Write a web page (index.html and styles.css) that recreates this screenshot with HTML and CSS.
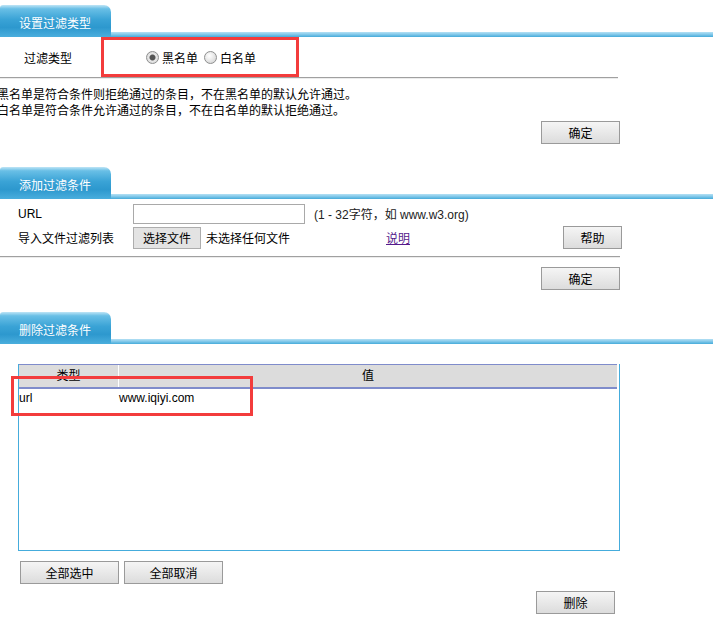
FILE: index.html
```html
<!DOCTYPE html>
<html lang="zh-CN">
<head>
    <meta charset="UTF-8">
    <title>过滤设置</title>
    <link rel="stylesheet" href="styles.css">
</head>
<body>
    <!-- 设置过滤类型 -->
    <section class="panel panel-type">
        <div class="tab-head"><span class="tab">设置过滤类型</span></div>
        <div class="type-row">
            <span class="type-label">过滤类型</span>
            <div class="mark-box">
                <label class="radio"><input type="radio" name="mode" checked>黑名单</label>
                <label class="radio"><input type="radio" name="mode">白名单</label>
            </div>
        </div>
        <hr class="sep sep-short">
        <p class="note">黑名单是符合条件则拒绝通过的条目，不在黑名单的默认允许通过。<br>白名单是符合条件允许通过的条目，不在白名单的默认拒绝通过。</p>
        <div class="actions actions-type"><button class="btn btn-ok">确定</button></div>
    </section>

    <!-- 添加过滤条件 -->
    <section class="panel panel-add">
        <div class="tab-head"><span class="tab">添加过滤条件</span></div>
        <div class="form-row">
            <span class="form-label">URL</span>
            <input class="url-input" type="text">
            <span class="hint">(1 - 32字符，如 www.w3.org)</span>
        </div>
        <div class="form-row">
            <span class="form-label">导入文件过滤列表</span>
            <span class="file-btn">选择文件</span>
            <span class="file-name">未选择任何文件</span>
            <a class="help-link" href="#">说明</a>
            <button class="btn btn-help">帮助</button>
        </div>
        <hr class="sep">
        <div class="actions actions-add"><button class="btn btn-ok">确定</button></div>
    </section>

    <!-- 删除过滤条件 -->
    <section class="panel panel-del">
        <div class="tab-head"><span class="tab">删除过滤条件</span></div>
        <div class="list-box">
            <div class="list-head">
                <span class="col-type">类型</span>
                <span class="col-value">值</span>
            </div>
            <div class="list-row">
                <span class="col-type">url</span>
                <span class="col-value">www.iqiyi.com</span>
            </div>
            <div class="mark-row"></div>
        </div>
        <div class="list-actions">
            <button class="btn btn-wide">全部选中</button>
            <button class="btn btn-wide">全部取消</button>
        </div>
        <div class="actions actions-del"><button class="btn btn-ok">删除</button></div>
    </section>
</body>
</html>
```

FILE: styles.css
```css
* {
    margin: 0;
    padding: 0;
    box-sizing: border-box;
}

body {
    font-family: "Liberation Sans", "Noto Sans CJK SC", sans-serif;
    font-size: 12px;
    color: #000;
    background: #fff;
    width: 713px;
}

/* cabecera con pestaña */
.tab-head {
    height: 37px;
    padding-top: 5px;
    background: linear-gradient(#b4e0f4, #8ccdec 40%, #45abda) no-repeat left bottom / 100% 5px;
}

.tab {
    display: inline-block;
    width: 111px;
    height: 32px;
    padding: 12px 0 0 19px;
    color: #fff;
    font-size: 12px;
    line-height: 14px;
    border-radius: 3px 7px 0 0;
    background: linear-gradient(#bfe5f6 0, #69bfe6 12%, #3aa3d6 45%, #2d98ce 70%, #4aaedd 100%);
}

.panel-add {
    margin-top: 18px;
}

.panel-del {
    margin-top: 17px;
}

/* tipo de filtro */
.type-row {
    display: flex;
    align-items: center;
    height: 40px;
    padding-left: 24px;
}

.type-label {
    width: 77px;
}

.mark-box {
    display: flex;
    align-items: center;
    gap: 6px;
    width: 198px;
    height: 40px;
    padding-left: 42px;
    border: 3px solid #f33c3c;
}

.radio {
    display: flex;
    align-items: center;
    gap: 3px;
}

.radio input {
    appearance: none;
    width: 13px;
    height: 13px;
    border: 1px solid #8e8f8f;
    border-radius: 50%;
    background: radial-gradient(circle at 40% 35%, #fff, #d8d8d8 80%);
}

.radio input:checked {
    background: radial-gradient(circle, #555 0, #555 2.5px, #e9e9e9 3.5px, #cfcfcf 100%);
}

.sep {
    width: 620px;
    height: 2px;
    border: 0;
    border-top: 1px solid #a0a0a0;
    border-bottom: 1px solid #ececec;
}

.sep-short {
    width: 618px;
}

.note {
    margin: 8px 0 0 -3px;
    line-height: 16px;
}

.actions {
    display: flex;
    padding-left: 541px;
    margin-top: 10px;
}

.actions-type {
    margin-top: 2px;
}

.actions-add {
    margin-top: 9px;
}

.btn {
    height: 23px;
    font-family: inherit;
    font-size: 12px;
    color: #000;
    border: 1px solid #9a9a9a;
    background: linear-gradient(#f5f5f5, #dcdcdc);
}

.btn-ok {
    width: 79px;
}

/* formulario */
.panel-add .tab-head {
    margin-bottom: 4px;
}

.form-row {
    display: flex;
    align-items: center;
    height: 21px;
    padding-left: 18px;
}

.form-row + .form-row {
    height: 23px;
    margin-top: 2px;
    margin-bottom: 7px;
}

.form-label {
    width: 115px;
}

.url-input {
    width: 172px;
    height: 20px;
    border: 1px solid #a9a9a9;
}

.hint {
    margin-left: 9px;
    color: #222;
}

.file-btn {
    display: inline-flex;
    align-items: center;
    justify-content: center;
    width: 68px;
    height: 22px;
    border: 1px solid #adadad;
    background: #e3e3e3;
}

.file-name {
    margin-left: 5px;
    width: 180px;
}

.help-link {
    color: #551a8b;
}

.btn-help {
    width: 59px;
    margin-left: 153px;
}

/* lista */
.list-box {
    position: relative;
    width: 602px;
    height: 187px;
    margin: 20px 0 0 18px;
    border: 1px solid #45acdc;
    border-top: 0;
}

.list-head {
    display: flex;
    height: 25px;
    margin-right: 2px;
    line-height: 23px;
    background: #dcdcdc;
    border-top: 1px solid #7f8ccb;
    border-bottom: 2px solid #7f8ccb;
}

.list-head .col-type {
    text-align: center;
    border-right: 1px solid #fff;
}

.list-head .col-value {
    padding-left: 243px;
}

.col-type {
    width: 100px;
}

.list-row {
    display: flex;
    padding-top: 2px;
    line-height: 14px;
}

.mark-row {
    position: absolute;
    left: -8px;
    top: 12px;
    width: 242px;
    height: 40px;
    border: 3px solid #f33c3c;
}

.list-actions {
    display: flex;
    gap: 5px;
    margin: 10px 0 0 20px;
}

.btn-wide {
    width: 99px;
}

.actions-del {
    padding-left: 536px;
    margin-top: 7px;
}
```
